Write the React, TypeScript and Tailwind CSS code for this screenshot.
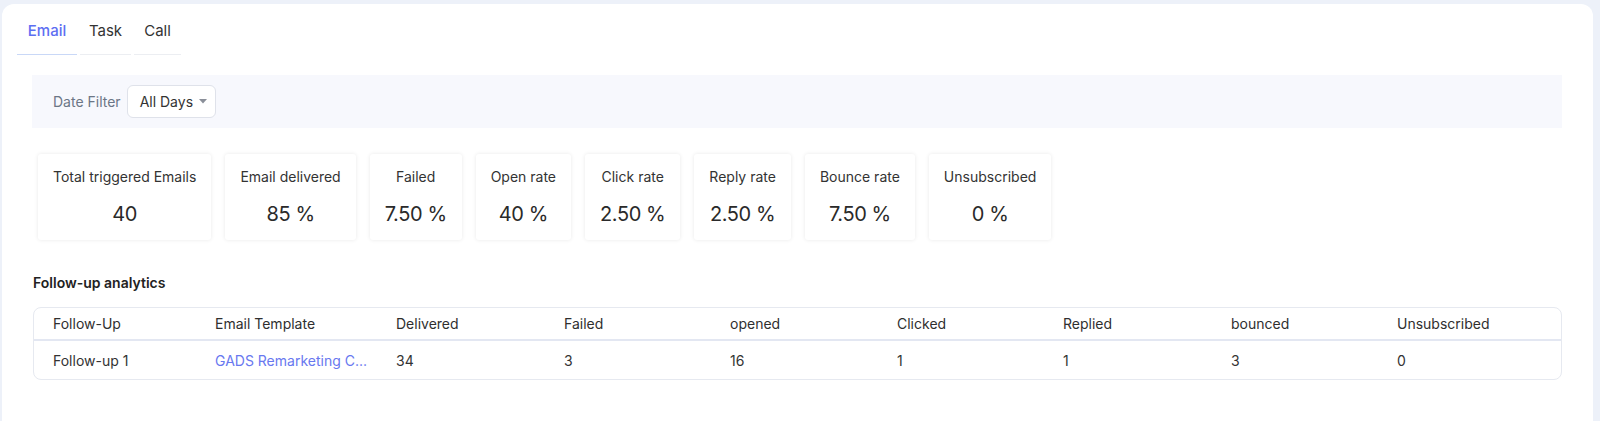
import React from "react";

const stats = [
  { label: "Total triggered Emails", value: "40" },
  { label: "Email delivered", value: "85 %" },
  { label: "Failed", value: "7.50 %" },
  { label: "Open rate", value: "40 %" },
  { label: "Click rate", value: "2.50 %" },
  { label: "Reply rate", value: "2.50 %" },
  { label: "Bounce rate", value: "7.50 %" },
  { label: "Unsubscribed", value: "0 %" },
];

const headers = ["Follow-Up", "Email Template", "Delivered", "Failed", "opened", "Clicked", "Replied", "bounced", "Unsubscribed"];
const row = ["Follow-up 1", "GADS Remarketing C...", "34", "3", "16", "1", "1", "3", "0"];

export default function App() {
  return (
    <div className="min-h-[421px] w-[1600px] bg-[#edf1f9] pl-[2px] pt-[4px] pr-[7px] font-['Inter',sans-serif] text-[#2f2f2f]">
      <div className="min-h-[417px] rounded-t-[12px] bg-white pb-10">
        {/* Tabs */}
        <div className="flex gap-[3px] pl-[15px] pt-[15px]">
          <div className="w-[60px] border-b border-[#c9d8f7] pb-[11px] text-center text-[15px] font-medium leading-[24px] text-[#5d6ef2]">Email</div>
          <div className="w-[51px] border-b border-[#eceef2] pb-[11px] text-center text-[15px] leading-[24px] text-[#333]">Task</div>
          <div className="w-[47px] border-b border-[#eceef2] pb-[11px] text-center text-[15px] leading-[24px] text-[#333]">Call</div>
        </div>

        <div className="pl-[30px] pr-[31px]">
          {/* Date filter */}
          <div className="mt-[20px] flex h-[53px] items-center bg-[#f7f8fd] pl-[21px]">
            <span className="text-[14px] text-[#6b7686]">Date Filter</span>
            <button className="ml-[6px] flex h-[33px] w-[89px] items-center rounded-[6px] border border-[#dfe2ea] bg-white pl-[12px] text-[14px] text-[#333]">
              All Days
              <svg className="ml-[6px]" width="8" height="5" viewBox="0 0 8 5">
                <path d="M0 0 L8 0 L4 4.5 Z" fill="#8a8f99" />
              </svg>
            </button>
          </div>

          {/* Stats */}
          <div className="mt-[26px] flex gap-[14px] pl-[6px]">
            {stats.map((s) => (
              <div
                key={s.label}
                className="flex h-[86px] flex-col items-center rounded-[3px] bg-white px-[15px] pt-[13px] shadow-[0_0_4px_rgba(0,0,0,0.09)]"
              >
                <div className="whitespace-nowrap text-[14px] leading-[20px] text-[#333]">{s.label}</div>
                <div className="mt-[14px] whitespace-nowrap text-[20px] leading-[26px] tracking-[-0.4px] text-[#2a2a2a]">{s.value}</div>
              </div>
            ))}
          </div>

          {/* Follow-up analytics */}
          <div className="mt-[33px] pl-[1px] text-[14px] font-semibold leading-[20px] text-[#222]">Follow-up analytics</div>
          <div className="mt-[14px] ml-[1px] overflow-hidden rounded-[8px] border border-[#e6e9f0]">
            <div className="grid h-[33px] grid-cols-[162px_181px_168px_166px_167px_166px_168px_166px_1fr] items-center border-b-2 border-[#e3e7f2]">
              {headers.map((h) => (
                <div key={h} className="pl-[19px] text-[14px] text-[#2f2f2f]">{h}</div>
              ))}
            </div>
            <div className="grid h-[38px] grid-cols-[162px_181px_168px_166px_167px_166px_168px_166px_1fr] items-center pt-[1px]">
              {row.map((c, i) => (
                <div key={i} className={`pl-[19px] text-[14px] ${i === 1 ? "text-[#6878f0]" : "text-[#333]"}`}>{c}</div>
              ))}
            </div>
          </div>
        </div>
      </div>
    </div>
  );
}
